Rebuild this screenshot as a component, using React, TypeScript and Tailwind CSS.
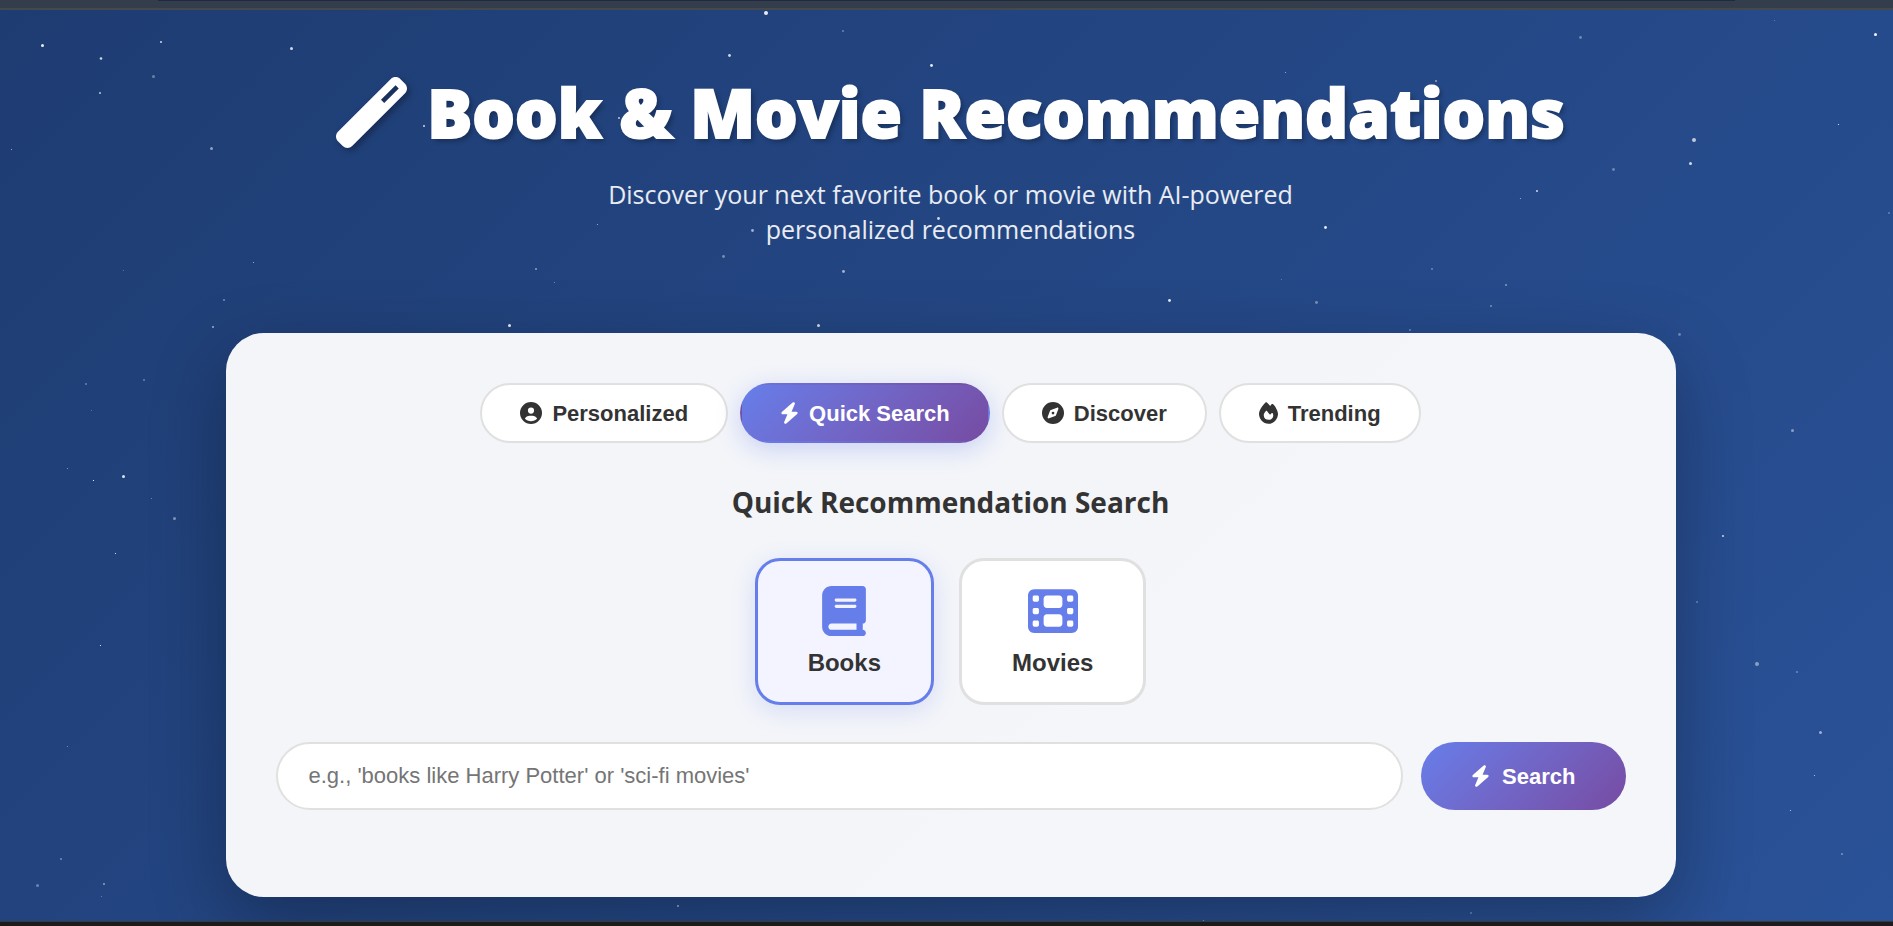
import { useState } from "react";
import type { ComponentType } from "react";
import {
  FaBolt,
  FaBook,
  FaCircleUser,
  FaCompass,
  FaFilm,
  FaFire,
  FaWandMagic,
} from "react-icons/fa6";

type Icon = ComponentType<{ className?: string }>;

// x, y, radius, opacity
const STARS: [number, number, number, number][] = [
  [42.5, 45.5, 1.5, 0.9], [101, 58.5, 1.3, 0.8], [161, 42, 1, 0.8], [291.5, 48.5, 1.5, 0.8],
  [153.5, 76.5, 1.5, 0.35], [100, 93, 1, 0.7], [11.5, 149.5, 0.6, 0.6], [211.5, 148.5, 1.5, 0.5],
  [424, 126, 1, 0.8], [619, 118, 1, 0.7], [253.5, 262.5, 0.6, 0.6], [123.5, 270.5, 0.6, 0.3],
  [224, 300, 1, 0.4], [536, 269, 1, 0.5], [554.5, 282.5, 0.6, 0.4], [597.5, 224.5, 0.6, 0.6],
  [766, 13, 2, 0.9], [843, 31, 1, 0.35], [729.5, 55.5, 1.4, 0.8], [931.5, 65.5, 1.4, 0.9],
  [938.5, 218.5, 1.4, 0.8], [752.5, 230.5, 1.4, 0.6], [723.5, 256.5, 1.4, 0.4], [843.5, 271.5, 1.4, 0.6],
  [1169.5, 300.5, 1.4, 0.9], [1580.5, 37.5, 1.4, 0.35], [1774.5, 20.5, 0.6, 0.3], [1875.5, 34.5, 1.5, 0.95],
  [1285.5, 72.5, 0.6, 0.6], [1436, 81, 1, 0.5], [1838.5, 124.5, 0.6, 0.9], [1694, 140, 2, 0.7],
  [1690.5, 163.5, 1.5, 0.8], [1613.5, 169.5, 1.4, 0.35], [1537, 191, 1, 0.8], [1520.5, 198.5, 0.6, 0.6],
  [1325.5, 227.5, 1.4, 0.9], [1889, 213, 1, 0.3], [1432, 269, 1, 0.35], [1281.5, 279.5, 0.6, 0.3],
  [1506, 285, 1, 0.45], [1316.5, 302.5, 1.4, 0.4], [1491, 306, 1, 0.4], [213, 327, 1, 0.6],
  [144, 380, 1, 0.35], [86, 384, 1, 0.35], [91.5, 410.5, 0.6, 0.3], [67.5, 468.5, 0.6, 0.5],
  [93.5, 480.5, 0.6, 1], [123.5, 476.5, 1.5, 0.85], [151.5, 498.5, 0.6, 0.4], [174.5, 518.5, 1.5, 0.45],
  [115.5, 553.5, 0.6, 0.9], [100.5, 645.5, 0.6, 0.9], [67.5, 746.5, 0.6, 0.4], [61, 859, 1, 0.4],
  [37.5, 885.5, 1.5, 0.35], [104, 884, 1, 0.5], [101.5, 896.5, 0.6, 0.35], [509.5, 325.5, 1.5, 0.9],
  [818.5, 325.5, 1.5, 0.8], [1410, 330, 1, 0.35], [1679.5, 334.5, 1.4, 0.35], [1792.5, 430.5, 1.5, 0.45],
  [1723, 536, 1, 0.8], [1697, 602, 1, 0.35], [1757, 664, 2, 0.45], [1797, 672, 1, 0.35],
  [1820.5, 732.5, 1.5, 0.55], [1814.5, 775.5, 0.6, 0.7], [1790.5, 810.5, 0.6, 0.7], [1842, 854, 1, 0.4],
  [1471, 913, 1, 0.35], [678, 906, 1, 0.6], [1203.5, 920.5, 0.6, 0.5],
];

function StarField() {
  return (
    <svg className="pointer-events-none absolute inset-0 h-full w-full" aria-hidden="true">
      {STARS.map(([x, y, r, o]) => (
        <circle key={`${x}-${y}`} cx={x} cy={y} r={r} fill="#fff" fillOpacity={o} />
      ))}
    </svg>
  );
}

const TABS: { label: string; icon: Icon; size: string }[] = [
  { label: "Personalized", icon: FaCircleUser, size: "h-[22px] w-[22px]" },
  { label: "Quick Search", icon: FaBolt, size: "h-[22px] w-[19px]" },
  { label: "Discover", icon: FaCompass, size: "h-[22px] w-[22px]" },
  { label: "Trending", icon: FaFire, size: "h-[22px] w-[19px]" },
];

const KINDS: { label: string; icon: Icon; size: string }[] = [
  { label: "Books", icon: FaBook, size: "h-[50px] w-11" },
  { label: "Movies", icon: FaFilm, size: "h-[50px] w-[50px]" },
];

export default function App() {
  const [tab, setTab] = useState("Quick Search");
  const [kind, setKind] = useState("Books");
  const [query, setQuery] = useState("");

  return (
    <div className="relative flex min-h-screen flex-col bg-linear-135 from-[#1e3c72] to-[#2a5298] font-['Open_Sans','Noto_Sans',sans-serif]">
      <div className="flex h-2.5 justify-center border-b-2 border-[#46494c] bg-[#343d4c]">
        <div className="h-px w-5/6 bg-[#1f2a3e]" />
      </div>
      <StarField />

      <main className="relative flex grow flex-col items-center pt-[60px] pr-5 pb-6 pl-7">
        <header className="flex flex-col items-center text-center text-white">
          <h1 className="flex items-center gap-5 text-[67px] leading-[84px] font-extrabold text-shadow-[3px_3px_5px_rgba(0,0,0,0.3)] [-webkit-text-stroke:2px_white]">
            <FaWandMagic className="h-[71px] w-[71px] shrink-0 drop-shadow-[3px_3px_3px_rgba(0,0,0,0.3)]" />
            Book &amp; Movie Recommendations
          </h1>
          <p className="mt-[23px] max-w-[750px] text-[25px] leading-[35px] text-white/90">
            Discover your next favorite book or movie with AI-powered personalized recommendations
          </p>
        </header>

        <section className="mt-[86px] flex w-full max-w-[1450px] flex-col items-center rounded-[38px] bg-white/95 px-[50px] pt-[50px] pb-[87px] shadow-[0_25px_75px_rgba(0,0,0,0.3)]">
          <nav className="flex flex-wrap justify-center gap-3 font-['Liberation_Sans',Arial,sans-serif]">
            {TABS.map(({ label, icon: TabIcon, size }) => (
              <button
                key={label}
                type="button"
                aria-pressed={tab === label}
                onClick={() => setTab(label)}
                className={
                  tab === label
                    ? "flex h-[60px] items-center gap-2.5 rounded-full border-2 border-transparent bg-linear-135 from-[#667eea] to-[#764ba2] px-[38px] text-[22px] font-bold text-white shadow-[0_6px_25px_rgba(102,126,234,0.3)]"
                    : "flex h-[60px] items-center gap-2.5 rounded-full border-2 border-[#e0e0e0] bg-white px-[38px] text-[22px] font-bold text-[#333]"
                }
              >
                <TabIcon className={size} />
                {label}
              </button>
            ))}
          </nav>

          <h2 className="mt-[39px] text-[28px] leading-10 font-bold text-[#333]">
            Quick Recommendation Search
          </h2>

          <div className="mt-9 flex flex-wrap justify-center gap-[25px] font-['Liberation_Sans',Arial,sans-serif]">
            {KINDS.map(({ label, icon: KindIcon, size }) => (
              <button
                key={label}
                type="button"
                aria-pressed={kind === label}
                onClick={() => setKind(label)}
                className={
                  kind === label
                    ? "flex flex-col items-center gap-[13px] rounded-[25px] border-3 border-[#667eea] bg-[#f3f4ff] px-[50px] py-[25px] text-[24px] leading-7 font-bold text-[#333] shadow-[0_6px_25px_rgba(102,126,234,0.2)]"
                    : "flex flex-col items-center gap-[13px] rounded-[25px] border-3 border-[#e0e0e0] bg-white px-[50px] py-[25px] text-[24px] leading-7 font-bold text-[#333]"
                }
              >
                <KindIcon className={`${size} text-[#667eea]`} />
                {label}
              </button>
            ))}
          </div>

          <form
            className="mt-[37px] flex w-full gap-[18px] font-['Liberation_Sans',Arial,sans-serif]"
            onSubmit={(event) => event.preventDefault()}
          >
            <input
              type="text"
              aria-label="Search for recommendations"
              value={query}
              onChange={(event) => setQuery(event.target.value)}
              placeholder="e.g., 'books like Harry Potter' or 'sci-fi movies'"
              className="h-[68px] min-w-0 grow rounded-full border-2 border-[#e0e0e0] bg-white px-[31px] text-[22px] text-[#333] outline-none placeholder:text-[#757575]"
            />
            <button
              type="submit"
              className="flex h-[68px] items-center gap-3 rounded-full bg-linear-135 from-[#667eea] to-[#764ba2] px-[50px] text-[22px] font-bold text-white"
            >
              <FaBolt className="h-[22px] w-[19px]" />
              Search
            </button>
          </form>
        </section>
      </main>

      <div className="relative h-[5px] border-t border-[#3a3a3a] bg-[#1c1c1c]" />
    </div>
  );
}
